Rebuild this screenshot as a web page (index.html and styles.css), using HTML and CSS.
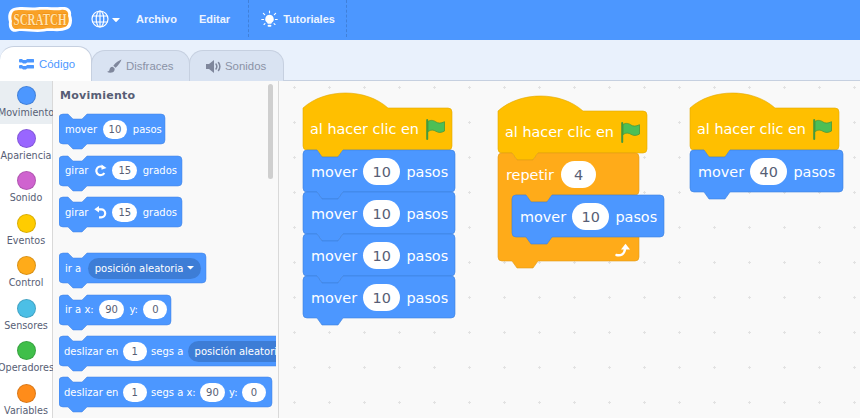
FILE: index.html
```html
<!DOCTYPE html>
<html lang="es">
<head>
    <meta charset="UTF-8">
    <title>Scratch</title>
    <link rel="stylesheet" href="styles.css">
</head>
<body>
    <header class="menu-bar">
        <svg class="logo" width="64" height="25" viewBox="0 0 64 25">
            <path d="M6 1C14 -1 20 1 27 .5C36 -1 46 1 52 0C60 -1 64 3 63 8C65 13 64 20 60 22C52 26 44 23 36 24.500C26 26 16 23 9 24.500C3 26 0 21 1 15C-1 9 1 2 6 1z" fill="#fff"/>
            <path d="M7 3.500C16 2 22 4 30 3C38 2 48 4 53 3C59 2 61 6 60 9C62 14 60 19 57 20C50 22.500 42 20.500 35 22C26 23 16 21 9 22C5 22.500 3 19 4 14C2.500 10 4 4 7 3.500z" fill="#f9a126"/>
            <text class="logo-text" transform="translate(32 17.500) scale(1 1.250)" text-anchor="middle" textLength="53" lengthAdjust="spacingAndGlyphs">SCRATCH</text>
        </svg>
        <svg class="globe" width="18" height="18" viewBox="0 0 18 18" fill="none" stroke="#fff" stroke-width="1.200">
            <circle cx="9" cy="9" r="8"/>
            <ellipse cx="9" cy="9" rx="3.800" ry="8"/>
            <path d="M9 1v16M1.500 6h15M1.500 12h15"/>
        </svg>
        <svg class="caret" width="8" height="4" viewBox="0 0 8 4"><path d="M0 0h8l-3.200 3.500a1 1 0 0 1-1.600 0z" fill="#fff"/></svg>
        <span class="menu-item archivo">Archivo</span>
        <span class="menu-item editar">Editar</span>
        <div class="tutorials">
            <svg width="17" height="18" viewBox="0 0 18 18" fill="#fff">
                <path d="M9 4.500a4.500 4.500 0 0 0-2.700 8.100c.5.400.7.800.7 1.400h4c0-.6.200-1 .7-1.400A4.500 4.500 0 0 0 9 4.500z"/>
                <rect x="7" y="15" width="4" height="2.200" rx="1"/>
                <path d="M9 .5v2M2.500 3l1.400 1.400M15.500 3l-1.400 1.400M.8 9.500h2M15.200 9.500h2M3.200 14.800l1-1M14.800 14.800l-1-1" stroke="#fff" stroke-width="1.200" stroke-linecap="round"/>
            </svg>
            <span class="menu-item">Tutoriales</span>
        </div>
    </header>

    <nav class="tabs">
        <div class="tab tab-active">
            <svg width="15" height="11" viewBox="0 0 15 11" fill="#4c97ff">
                <path d="M0 1a1 1 0 0 1 1-1h2l1 1h3l1-1h6a1 1 0 0 1 0 3.500H8l-1 1H4l-1-1H1a1 1 0 0 1-1-1z"/>
                <path d="M0 7a1 1 0 0 1 1-1h2l1 1h3l1-1h6a1 1 0 0 1 0 3.500H8l-1 1H4l-1-1H1a1 1 0 0 1-1-1z"/>
            </svg>
            <span>Código</span>
        </div>
        <div class="tab tab-costumes">
            <svg width="15" height="15" viewBox="0 0 15 15" fill="#7f879c">
                <path d="M14.500.5c-2.500.8-6 3.200-8.200 6.300l2.300 2C11 6.500 13.800 3 14.500.5z"/>
                <path d="M5.500 7.800c-2 0-2.800 1.500-3 3-.1 1-1 1.700-2.500 2 2 1.500 6.500 1.500 7.500-1.500.3-1 .2-1.700-.2-2.200z"/>
            </svg>
            <span>Disfraces</span>
        </div>
        <div class="tab tab-sounds">
            <svg width="15" height="13" viewBox="0 0 15 13" fill="#7f879c">
                <path d="M0 4h3l5-4v13l-5-4H0z"/>
                <path d="M10 4c1 1.500 1 3.500 0 5M12.500 2.500c1.700 2.500 1.700 5.500 0 8" fill="none" stroke="#7f879c" stroke-width="1.500" stroke-linecap="round"/>
            </svg>
            <span>Sonidos</span>
        </div>
    </nav>

    <main class="editor">
        <aside class="categories">
            <div class="category category-active"><i class="dot dot-motion"></i><span>Movimiento</span></div>
            <div class="category"><i class="dot dot-looks"></i><span>Apariencia</span></div>
            <div class="category"><i class="dot dot-sound"></i><span>Sonido</span></div>
            <div class="category"><i class="dot dot-events"></i><span>Eventos</span></div>
            <div class="category"><i class="dot dot-control"></i><span>Control</span></div>
            <div class="category"><i class="dot dot-sensing"></i><span>Sensores</span></div>
            <div class="category"><i class="dot dot-operators"></i><span>Operadores</span></div>
            <div class="category"><i class="dot dot-variables"></i><span>Variables</span></div>
        </aside>

        <section class="palette">
            <div class="palette-scroll">
                <h2 class="palette-title">Movimiento</h2>

                <div class="pblock">
                    <svg class="shape" width="106" height="35"><path d="M0 4a4 4 0 0 1 4-4h5l5 5h9l5-5H102a4 4 0 0 1 4 4v22a4 4 0 0 1-4 4H28l-5 5h-9l-5-5H4a4 4 0 0 1-4-4z"/></svg>
                    <span>mover</span><b class="pill">10</b><span>pasos</span>
                </div>
                <div class="pblock">
                    <svg class="shape" width="123" height="35"><path d="M0 4a4 4 0 0 1 4-4h5l5 5h9l5-5H119a4 4 0 0 1 4 4v22a4 4 0 0 1-4 4H28l-5 5h-9l-5-5H4a4 4 0 0 1-4-4z"/></svg>
                    <span>girar</span>
                    <svg class="turn" width="13" height="13" viewBox="0 0 13 13"><path d="M9.500 3.600A4.300 4.300 0 1 0 10.300 9" fill="none" stroke="#fff" stroke-width="2.200"/><path d="M7.500.6l5 3.400-5 1.800z" fill="#fff"/></svg>
                    <b class="pill">15</b><span>grados</span>
                </div>
                <div class="pblock">
                    <svg class="shape" width="123" height="35"><path d="M0 4a4 4 0 0 1 4-4h5l5 5h9l5-5H119a4 4 0 0 1 4 4v22a4 4 0 0 1-4 4H28l-5 5h-9l-5-5H4a4 4 0 0 1-4-4z"/></svg>
                    <span>girar</span>
                    <svg class="turn" width="13" height="13" viewBox="0 0 13 13"><path d="M4 3.300h3.200a4 4 0 0 1 0 8H5" fill="none" stroke="#fff" stroke-width="2.200"/><path d="M5 0v6.500L.3 3.300z" fill="#fff"/></svg>
                    <b class="pill">15</b><span>grados</span>
                </div>

                <div class="pblock pblock-spaced">
                    <svg class="shape" width="147" height="35"><path d="M0 4a4 4 0 0 1 4-4h5l5 5h9l5-5H143a4 4 0 0 1 4 4v22a4 4 0 0 1-4 4H28l-5 5h-9l-5-5H4a4 4 0 0 1-4-4z"/></svg>
                    <span>ir a</span>
                    <b class="dropdown dropdown-first">posición aleatoria<svg width="7" height="4" viewBox="0 0 7 4"><path d="M0 0h7L3.500 3.500z" fill="#fff"/></svg></b>
                </div>
                <div class="pblock">
                    <svg class="shape" width="112" height="35"><path d="M0 4a4 4 0 0 1 4-4h5l5 5h9l5-5H108a4 4 0 0 1 4 4v22a4 4 0 0 1-4 4H28l-5 5h-9l-5-5H4a4 4 0 0 1-4-4z"/></svg>
                    <span>ir a x:</span><b class="pill">90</b><span>y:</span><b class="pill">0</b>
                </div>
                <div class="pblock pblock-tight">
                    <svg class="shape" width="340" height="35"><path d="M0 4a4 4 0 0 1 4-4h5l5 5h9l5-5H336a4 4 0 0 1 4 4v22a4 4 0 0 1-4 4H28l-5 5h-9l-5-5H4a4 4 0 0 1-4-4z"/></svg>
                    <span>deslizar en</span><b class="pill">1</b><span>segs a</span>
                    <b class="dropdown">posición aleatoria</b>
                </div>
                <div class="pblock pblock-tight">
                    <svg class="shape" width="213" height="35"><path d="M0 4a4 4 0 0 1 4-4h5l5 5h9l5-5H209a4 4 0 0 1 4 4v22a4 4 0 0 1-4 4H28l-5 5h-9l-5-5H4a4 4 0 0 1-4-4z"/></svg>
                    <span>deslizar en</span><b class="pill">1</b><span>segs a x:</span><b class="pill">90</b><span>y:</span><b class="pill">0</b>
                </div>
            </div>
            <div class="scrollbar"></div>
        </section>

        <section class="workspace">
            <div class="script script-a">
                <div class="hat">
                    <svg class="shape" width="149" height="64"><path d="M0 15c22-20 63-20 85 0H145a4 4 0 0 1 4 4v34a4 4 0 0 1-4 4H40l-5 7H19l-5-7H4a4 4 0 0 1-4-4z"/></svg>
                    <span>al hacer clic en</span>
                    <svg class="flag" width="20" height="21" viewBox="0 0 20 21"><path d="M1.200 1v19" stroke="#45993d" stroke-width="2" stroke-linecap="round"/><path d="M2 2.500c3-2 6-1 8 .5s5 1.500 8.500-.3V12c-3.500 2-6 1.800-8.500.3S5 10.500 2 12.500z" fill="#4cbf56" stroke="#45993d" stroke-width=".8"/></svg>
                </div>
                <div class="wblock">
                    <svg class="shape" width="152" height="49"><path d="M0 4a4 4 0 0 1 4-4h10l5 7h16l5-7H148a4 4 0 0 1 4 4v34a4 4 0 0 1-4 4H40l-5 7H19l-5-7H4a4 4 0 0 1-4-4z"/></svg>
                    <span>mover</span><b class="pill">10</b><span>pasos</span>
                </div>
                <div class="wblock">
                    <svg class="shape" width="152" height="49"><path d="M0 4a4 4 0 0 1 4-4h10l5 7h16l5-7H148a4 4 0 0 1 4 4v34a4 4 0 0 1-4 4H40l-5 7H19l-5-7H4a4 4 0 0 1-4-4z"/></svg>
                    <span>mover</span><b class="pill">10</b><span>pasos</span>
                </div>
                <div class="wblock">
                    <svg class="shape" width="152" height="49"><path d="M0 4a4 4 0 0 1 4-4h10l5 7h16l5-7H148a4 4 0 0 1 4 4v34a4 4 0 0 1-4 4H40l-5 7H19l-5-7H4a4 4 0 0 1-4-4z"/></svg>
                    <span>mover</span><b class="pill">10</b><span>pasos</span>
                </div>
                <div class="wblock">
                    <svg class="shape" width="152" height="49"><path d="M0 4a4 4 0 0 1 4-4h10l5 7h16l5-7H148a4 4 0 0 1 4 4v34a4 4 0 0 1-4 4H40l-5 7H19l-5-7H4a4 4 0 0 1-4-4z"/></svg>
                    <span>mover</span><b class="pill">10</b><span>pasos</span>
                </div>
            </div>

            <div class="script script-b">
                <div class="hat">
                    <svg class="shape" width="149" height="64"><path d="M0 15c22-20 63-20 85 0H145a4 4 0 0 1 4 4v34a4 4 0 0 1-4 4H40l-5 7H19l-5-7H4a4 4 0 0 1-4-4z"/></svg>
                    <span>al hacer clic en</span>
                    <svg class="flag" width="20" height="21" viewBox="0 0 20 21"><path d="M1.200 1v19" stroke="#45993d" stroke-width="2" stroke-linecap="round"/><path d="M2 2.500c3-2 6-1 8 .5s5 1.500 8.500-.3V12c-3.500 2-6 1.800-8.500.3S5 10.500 2 12.500z" fill="#4cbf56" stroke="#45993d" stroke-width=".8"/></svg>
                </div>
                <div class="cblock">
                    <svg class="shape" width="141" height="119"><path d="M0 4a4 4 0 0 1 4-4h10l5 7h16l5-7H137a4 4 0 0 1 4 4v34a4 4 0 0 1-4 4H54l-5 7H33l-5-7H18a4 4 0 0 0-4 4v30a4 4 0 0 0 4 4H137a4 4 0 0 1 4 4v20a4 4 0 0 1-4 4H40l-5 7H19l-5-7H4a4 4 0 0 1-4-4z"/></svg>
                    <div class="chead"><span>repetir</span><b class="pill">4</b></div>
                    <div class="wblock cinner">
                        <svg class="shape" width="152" height="49"><path d="M0 4a4 4 0 0 1 4-4h10l5 7h16l5-7H148a4 4 0 0 1 4 4v34a4 4 0 0 1-4 4H40l-5 7H19l-5-7H4a4 4 0 0 1-4-4z"/></svg>
                        <span>mover</span><b class="pill">10</b><span>pasos</span>
                    </div>
                    <div class="cfoot">
                        <svg width="16" height="14" viewBox="0 0 16 14"><path d="M1.500 12c4 1 8-.5 8.500-6" fill="none" stroke="#fff" stroke-width="2.400" stroke-linecap="round"/><path d="M6 6.500L10.500.8 15 6.500z" fill="#fff"/></svg>
                    </div>
                </div>
            </div>

            <div class="script script-c">
                <div class="hat">
                    <svg class="shape" width="149" height="64"><path d="M0 15c22-20 63-20 85 0H145a4 4 0 0 1 4 4v34a4 4 0 0 1-4 4H40l-5 7H19l-5-7H4a4 4 0 0 1-4-4z"/></svg>
                    <span>al hacer clic en</span>
                    <svg class="flag" width="20" height="21" viewBox="0 0 20 21"><path d="M1.200 1v19" stroke="#45993d" stroke-width="2" stroke-linecap="round"/><path d="M2 2.500c3-2 6-1 8 .5s5 1.500 8.500-.3V12c-3.500 2-6 1.800-8.500.3S5 10.500 2 12.500z" fill="#4cbf56" stroke="#45993d" stroke-width=".8"/></svg>
                </div>
                <div class="wblock">
                    <svg class="shape" width="153" height="49"><path d="M0 4a4 4 0 0 1 4-4h10l5 7h16l5-7H149a4 4 0 0 1 4 4v34a4 4 0 0 1-4 4H40l-5 7H19l-5-7H4a4 4 0 0 1-4-4z"/></svg>
                    <span>mover</span><b class="pill">40</b><span>pasos</span>
                </div>
            </div>
        </section>
    </main>
</body>
</html>
```

FILE: styles.css
```css
* {
    box-sizing: border-box;
}
html, body {
    height: 100%;
}
body {
    margin: 0;
    overflow: hidden;
    display: flex;
    flex-direction: column;
    font-family: "Liberation Sans", Arial, sans-serif;
    background-color: #e9f1fc;
}

/* top bar */
.menu-bar {
    height: 40px;
    flex-shrink: 0;
    display: flex;
    align-items: center;
    padding: 0 0 3px 8px;
    background-color: #4c97ff;
}
.logo {
    margin-top: 2px;
    margin-right: 19px;
}
.logo-text {
    font-family: "Liberation Serif", serif;
    font-size: 13px;
    font-weight: bold;
    fill: #ffe2ad;
    stroke: #ef8a08;
    stroke-width: .8px;
    paint-order: stroke;
}
.globe {
    margin-right: 3px;
}
.caret {
    margin-top: 3px;
    margin-right: 16px;
}
.menu-item {
    font-size: 11px;
    font-weight: bold;
    color: #fff;
    opacity: .9;
}
.archivo {
    margin-right: 22px;
}
.editar {
    margin-right: 18px;
}
.tutorials {
    height: 37px;
    display: flex;
    align-items: center;
    gap: 5px;
    padding: 0 11px 0 12px;
    border-left: 1px dashed rgba(0, 0, 0, .15);
    border-right: 1px dashed rgba(0, 0, 0, .15);
}

/* tabs */
.tabs {
    height: 41px;
    flex-shrink: 0;
    display: flex;
    align-items: flex-end;
    border-bottom: 1px solid #c6d0e0;
}
.tab {
    height: 31px;
    display: flex;
    align-items: center;
    gap: 4px;
    margin-right: -1px;
    margin-bottom: -1px;
    font-size: 11.400px;
    color: #8a92a6;
    background-color: #d9e3f2;
    border: 1px solid #c6d0e0;
    border-bottom: none;
    border-radius: 14px 14px 0 0;
}
.tab-active {
    position: relative;
    z-index: 1;
    width: 92px;
    height: 35px;
    padding-left: 19px;
    gap: 5px;
    color: #4c97ff;
    background-color: #fff;
    border-left: none;
}
.tab-costumes {
    width: 99px;
    padding-left: 15px;
}
.tab-sounds {
    width: 95px;
    padding-left: 16px;
}

/* editor row */
.editor {
    flex: 1;
    min-height: 0;
    display: flex;
    background-color: #fff;
}
.categories {
    width: 53px;
    flex-shrink: 0;
    border-right: 1px solid #d9d9d9;
}
.category {
    height: 42.500px;
    display: flex;
    flex-direction: column;
    align-items: center;
    padding-top: 5px;
    font-family: "DejaVu Sans", sans-serif;
    font-size: 9.600px;
    color: #575e75;
    white-space: nowrap;
}
.category-active {
    background-color: #e9eef2;
}
.dot {
    width: 19px;
    height: 19px;
    flex-shrink: 0;
    margin-bottom: 2px;
    border-radius: 50%;
    border: 1px solid rgba(0, 0, 0, .15);
}
.dot-motion { background-color: #4c97ff; }
.dot-looks { background-color: #9966ff; }
.dot-sound { background-color: #cf63cf; }
.dot-events { background-color: #ffcc00; }
.dot-control { background-color: #ffab19; }
.dot-sensing { background-color: #4cbfe6; }
.dot-operators { background-color: #40bf4a; }
.dot-variables { background-color: #ff8c1a; }

/* palette */
.palette {
    position: relative;
    width: 225px;
    flex-shrink: 0;
    padding-left: 6px;
    background-color: #f9f9f9;
}
.palette-scroll {
    width: 217px;
    height: 100%;
    overflow: hidden;
    padding-top: 8px;
    font-family: "DejaVu Sans", sans-serif;
}
.palette-title {
    height: 14px;
    margin: 0 0 11px 1px;
    font-size: 11px;
    line-height: 14px;
    letter-spacing: .25px;
    font-weight: bold;
    color: #575e75;
}
.scrollbar {
    position: absolute;
    top: 3px;
    left: 215px;
    width: 5px;
    height: 95px;
    border-radius: 3px;
    background-color: #cfcfcf;
}

/* blocks */
.shape {
    position: absolute;
    top: 0;
    left: 0;
    overflow: visible;
    z-index: -1;
}
.pblock, .wblock, .hat, .chead {
    display: flex;
    align-items: center;
    white-space: nowrap;
}
.pblock {
    position: relative;
    z-index: 0;
    width: max-content;
    height: 30px;
    margin-bottom: 11.500px;
    padding-left: 6px;
    gap: 5.500px;
    font-size: 10px;
    color: #fff;
}
.pblock-spaced {
    margin-top: 26px;
}
.pblock-tight {
    padding-left: 5px;
    gap: 4.300px;
    margin-bottom: 11px;
}
.pblock .shape path {
    fill: #4c97ff;
    stroke: #4080e0;
    stroke-width: .5px;
}
.pill {
    display: flex;
    align-items: center;
    justify-content: center;
    font-weight: normal;
    color: #575e75;
    background-color: #fff;
}
.pblock .pill {
    min-width: 24px;
    height: 19px;
    padding: 0 6px;
    border-radius: 10px;
}
.turn {
    flex-shrink: 0;
}
.dropdown {
    display: flex;
    align-items: center;
    gap: 4px;
    height: 21px;
    padding: 0 7px;
    font-weight: normal;
    border-radius: 11px;
    background-color: #3d7dd6;
}
.dropdown-first {
    margin-left: 1px;
}

/* workspace, the scripts lie on a free canvas */
.workspace {
    position: relative;
    flex: 1;
    border-left: 1px solid #d9d9d9;
    background-color: #f9f9f9;
    background-image: radial-gradient(circle, #e2e2e2 1px, transparent 1.200px);
    background-size: 35px 35px;
    background-position: -2px 24px;
    overflow: hidden;
    font-family: "DejaVu Sans", sans-serif;
    font-size: 14.400px;
    color: #fff;
}
.script {
    position: absolute;
    display: flex;
    flex-direction: column;
    align-items: flex-start;
}
.script-a {
    left: 24px;
    top: 12px;
}
.script-b {
    left: 219px;
    top: 15px;
}
.script-c {
    left: 411px;
    top: 12px;
}
.hat {
    position: relative;
    z-index: 0;
    width: 149px;
    height: 57px;
    padding: 15px 0 0 7px;
    gap: 7px;
}
.hat .shape path {
    fill: #ffbf00;
    stroke: #e0a800;
    stroke-width: .6px;
}
.wblock {
    position: relative;
    z-index: 0;
    height: 42px;
    padding: 1px 0 0 8px;
    gap: 6px;
}
.wblock .shape path {
    fill: #4c97ff;
    stroke: #3d7fdc;
    stroke-width: .6px;
}
.wblock .pill, .chead .pill {
    min-width: 35px;
    height: 27px;
    padding: 0 9.500px;
    border-radius: 14px;
}
.flag {
    flex-shrink: 0;
}
.cblock {
    position: relative;
    z-index: 0;
    width: 141px;
}
.cblock > .shape path {
    fill: #ffab19;
    stroke: #e09a18;
    stroke-width: .6px;
}
.chead {
    height: 42px;
    padding: 1px 0 0 8px;
    gap: 7px;
}
.cinner {
    margin-left: 14px;
    width: max-content;
}
.cfoot {
    height: 28px;
    display: flex;
    align-items: center;
    justify-content: flex-end;
    padding: 0 8px 2px 0;
}
```
